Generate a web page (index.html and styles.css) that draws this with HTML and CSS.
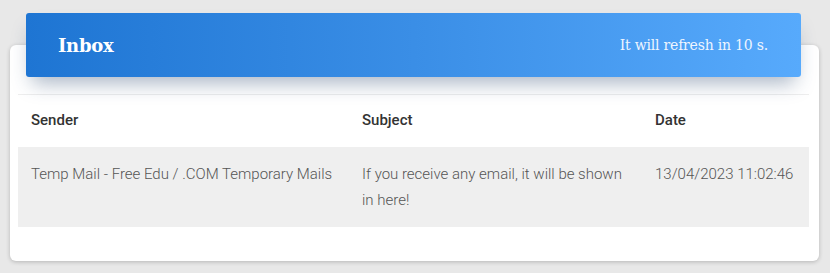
FILE: index.html
```html
<!DOCTYPE html>
<html>
<head>
<meta charset="utf-8">
<link rel="stylesheet" href="styles.css">
</head>
<body>
<div class="card">
  <div class="card-header">
    <h4 class="title">Inbox</h4>
    <p class="refresh">It will refresh in 10 s.</p>
  </div>
  <table class="mail-table">
    <thead>
      <tr>
        <th class="col-sender">Sender</th>
        <th class="col-subject">Subject</th>
        <th class="col-date">Date</th>
      </tr>
    </thead>
    <tbody>
      <tr class="mail-row">
        <td>Temp Mail - Free Edu / .COM Temporary Mails</td>
        <td>If you receive any email, it will be shown in here!</td>
        <td>13/04/2023 11:02:46</td>
      </tr>
    </tbody>
  </table>
</div>
</body>
</html>
```

FILE: styles.css
```css
html, body {
  margin: 0;
  padding: 0;
}
body {
  background: #e8e8e8;
  padding: 45px 11px 0 10px;
  font-family: Roboto, "Liberation Sans", sans-serif;
  height: 273px;
  box-sizing: border-box;
  overflow: hidden;
}
.card {
  background: #fff;
  border-radius: 6px;
  box-shadow: 0 1px 4px rgba(0, 0, 0, 0.22);
  padding: 0 10px 34px 8px;
}
.card-header {
  position: relative;
  top: -32px;
  margin: 0 8px -32px 8px;
  height: 64px;
  border-radius: 3px;
  background: linear-gradient(90deg, #1e75d3 0%, #3a8ee6 50%, #57aafc 100%);
  box-shadow: 0 12px 20px -6px rgba(40, 70, 110, 0.4);
  display: flex;
  align-items: center;
  justify-content: space-between;
  padding: 0 33px 0 32px;
  color: #fff;
  font-family: "DejaVu Serif", "Liberation Serif", serif;
}
.title {
  margin: 0;
  font-size: 18px;
  font-weight: bold;
  letter-spacing: -0.3px;
}
.refresh {
  margin: 0;
  font-size: 14px;
  color: #eef5ff;
  letter-spacing: -0.2px;
}
.mail-table {
  width: 100%;
  margin-top: 17px;
  border-collapse: collapse;
  border-top: 1px solid #eeeeee;
  table-layout: fixed;
}
.mail-table th {
  text-align: left;
  font-weight: 500;
  font-size: 15px;
  color: #333;
  padding: 15px 13px 16px 13px;
  line-height: 21px;
}
.col-sender { width: 305px; }
.col-subject { width: 267px; }
.mail-row {
  background: #efefef;
}
.mail-row td {
  vertical-align: top;
  font-weight: 300;
  font-size: 15px;
  color: #555;
  padding: 14px 13px;
  line-height: 26px;
}
```
